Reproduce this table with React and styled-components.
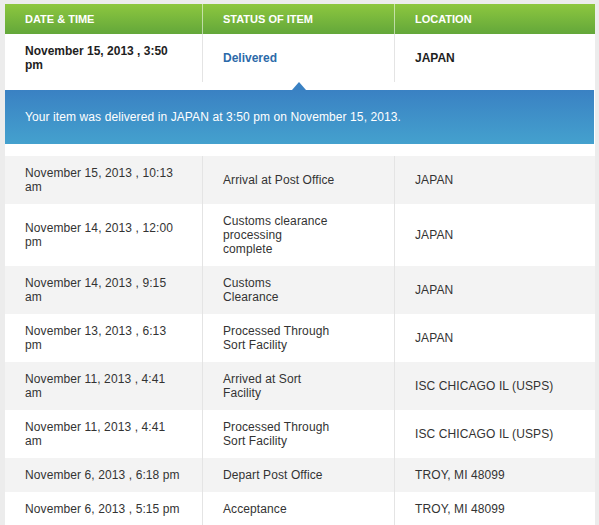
import React from 'react'
import styled, { createGlobalStyle } from 'styled-components'

const history = [
  { date: 'November 15, 2013 , 10:13\nam', status: 'Arrival at Post Office', location: 'JAPAN' },
  { date: 'November 14, 2013 , 12:00\npm', status: 'Customs clearance\nprocessing\ncomplete', location: 'JAPAN' },
  { date: 'November 14, 2013 , 9:15\nam', status: 'Customs\nClearance', location: 'JAPAN' },
  { date: 'November 13, 2013 , 6:13\npm', status: 'Processed Through\nSort Facility', location: 'JAPAN' },
  { date: 'November 11, 2013 , 4:41\nam', status: 'Arrived at Sort\nFacility', location: 'ISC CHICAGO IL (USPS)' },
  { date: 'November 11, 2013 , 4:41\nam', status: 'Processed Through\nSort Facility', location: 'ISC CHICAGO IL (USPS)' },
  { date: 'November 6, 2013 , 6:18 pm', status: 'Depart Post Office', location: 'TROY, MI 48099' },
  { date: 'November 6, 2013 , 5:15 pm', status: 'Acceptance', location: 'TROY, MI 48099' },
]

function App() {
  return (
    <>
      <GlobalStyle />
      <Page>
        <Tracking>
          <HeadRow>
            <HeadCell>Date &amp; Time</HeadCell>
            <HeadCell>Status of Item</HeadCell>
            <HeadCell last>Location</HeadCell>
          </HeadRow>

          <Row>
            <Cell strong>{'November 15, 2013 , 3:50\npm'}</Cell>
            <Cell strong><Delivered>Delivered</Delivered></Cell>
            <Cell strong last>JAPAN</Cell>
          </Row>

          <Detail>
            <Banner>Your item was delivered in JAPAN at 3:50 pm on November 15, 2013.</Banner>
          </Detail>

          {history.map((item, i) => (
            <Row key={i} shaded={i % 2 === 0}>
              <Cell>{item.date}</Cell>
              <Cell>{item.status}</Cell>
              <Cell last>{item.location}</Cell>
            </Row>
          ))}
        </Tracking>
      </Page>
    </>
  )
}

export default App

const GlobalStyle = createGlobalStyle`
  html, body {
    margin: 0;
    background: #ececec;
    font-family: "Liberation Sans", Arial, sans-serif;
  }
`

const Page = styled.div`
  padding: 4px 4px 0 5px;
`

const Tracking = styled.div`
  width: 590px;
  background: #fff;
`

const HeadRow = styled.div`
  display: grid;
  grid-template-columns: 198px 192px 200px;
  height: 30px;
  background: linear-gradient(#8dc73f, #63a73a);
`

const HeadCell = styled.div`
  display: flex;
  align-items: center;
  padding-left: 20px;
  color: #fff;
  font-size: 11px;
  font-weight: bold;
  text-transform: uppercase;
  border-right: ${p => (p.last ? 'none' : '1px solid rgba(255,255,255,0.55)')};
`

const Row = styled.div`
  display: grid;
  grid-template-columns: 198px 192px 200px;
  background: ${p => (p.shaded ? '#f3f3f3' : '#fff')};
`

const Cell = styled.div`
  display: flex;
  align-items: center;
  padding: 10px 20px;
  white-space: pre-line;
  font-size: 12px;
  line-height: 14px;
  letter-spacing: ${p => (p.strong ? '0' : '0.1px')};
  font-weight: ${p => (p.strong ? 'bold' : 'normal')};
  color: ${p => (p.strong ? '#1e1e1e' : '#333')};
  border-right: ${p => (p.last ? 'none' : '1px solid #e4e4e4')};
`

const Delivered = styled.span`
  color: #2c6aa9;
`

const Detail = styled.div`
  padding: 8px 0 12px;
  background: #fff;
`

const Banner = styled.div`
  position: relative;
  height: 54px;
  display: flex;
  align-items: center;
  padding-left: 20px;
  margin-right: 1px;
  color: #fff;
  font-size: 12px;
  letter-spacing: 0.1px;
  background: linear-gradient(#3a81c3, #44a1ce);

  &:before {
    content: "";
    position: absolute;
    left: 287px;
    top: -8px;
    border-left: 7px solid transparent;
    border-right: 7px solid transparent;
    border-bottom: 8px solid #3a81c3;
  }
`
